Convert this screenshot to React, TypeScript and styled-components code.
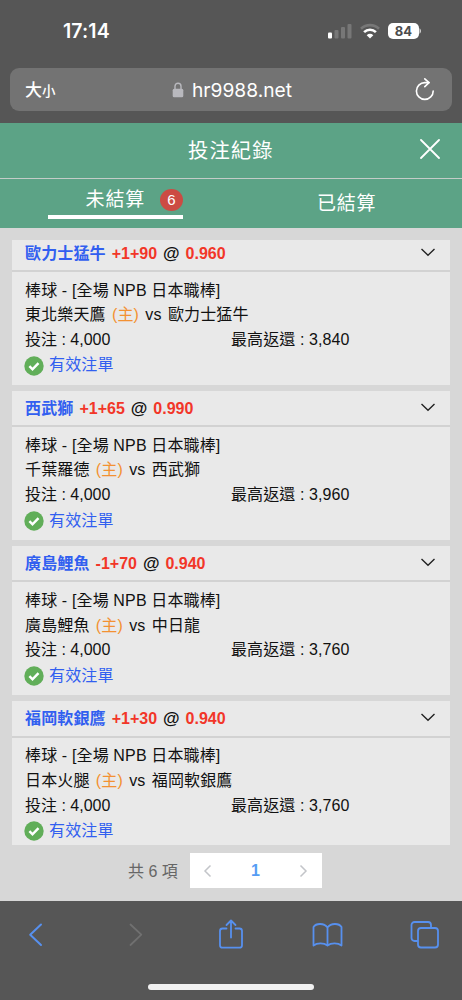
import React from "react";
import styled, { createGlobalStyle } from "styled-components";

const GlobalStyle = createGlobalStyle`
  * { box-sizing: border-box; }
  html, body { margin: 0; padding: 0; }
  body {
    background: #565656;
    font-family: "Liberation Sans", "Noto Sans CJK TC", sans-serif;
    font-size: 16px;
    color: #111;
  }
  svg { display: block; flex: none; }
`;

const Phone = styled.div`
  width: 462px;
  height: 1000px;
  display: flex;
  flex-direction: column;
  overflow: hidden;
  background: #565656;
`;

const StatusBar = styled.div`
  height: 68px;
  display: flex;
  justify-content: space-between;
  padding: 20px 41px 0 63px;
`;

const Clock = styled.div`
  font: 600 19.5px/23px Inter, sans-serif;
  letter-spacing: 0.1px;
  color: #fff;
`;

const StatusIcons = styled.div`
  display: flex;
  height: 22px;
  align-items: center;
`;

const Signal = styled.svg`
  margin-right: 8px;
`;

const Battery = styled.div`
  width: 31px;
  height: 16px;
  margin-left: 8px;
  border-radius: 5px;
  background: #fff;
  color: #4c4c4c;
  text-align: center;
  font: 700 13px/16px Inter, sans-serif;
`;

const AddressBar = styled.div`
  display: flex;
  align-items: center;
  height: 43px;
  margin: 0 10px 12px;
  padding: 0 17px 0 15px;
  border-radius: 9px;
  background: #737373;
  color: #fff;
`;

const TextSize = styled.div`
  width: 147px;
  font: 500 17px/24px "Noto Sans CJK TC", sans-serif;
  white-space: nowrap;

  small { font-size: 13.5px; }
`;

const Domain = styled.div`
  flex: 1;
  margin-left: 8px;
  font: 400 19.2px/24px Inter, sans-serif;
`;

const TitleBar = styled.header`
  display: flex;
  align-items: center;
  height: 56px;
  padding: 0 22px 3px 188px;
  background: #5ca386;
  border-bottom: 1px solid #c3ccc8;
  color: #fff;
`;

const Title = styled.h1`
  flex: 1;
  margin: 0;
  font: 400 20.3px/30px "Noto Sans CJK TC", sans-serif;
  letter-spacing: 1.1px;
`;

const Tabs = styled.nav`
  display: grid;
  grid-template-columns: 1fr 1fr;
  height: 49px;
  background: #5ca386;
  color: #fff;
`;

const Tab = styled.div<{ $active?: boolean }>`
  display: flex;
  align-items: flex-start;
  padding-top: ${(p) => (p.$active ? 5 : 9)}px;
  padding-left: ${(p) => (p.$active ? 48 : 86)}px;
  font: 400 19px/28px "Noto Sans CJK TC", sans-serif;
  letter-spacing: 0.8px;
`;

const ActiveLabel = styled.div`
  display: flex;
  align-items: center;
  justify-content: flex-end;
  width: 135px;
  height: 35px;
  padding-bottom: 3px;
  border-bottom: 4px solid #fff;
`;

const Count = styled.span`
  width: 23px;
  height: 22px;
  margin: 3px 0 0 15px;
  border-radius: 50%;
  background: #cc4b43;
  font: 400 15px/22px "Liberation Sans", sans-serif;
  letter-spacing: 0;
  text-align: center;
`;

const Content = styled.main`
  display: flex;
  flex-direction: column;
  height: 673px;
  padding: 12px 12px 0;
  background: #d7d7d7;
`;

const BetList = styled.div`
  display: flex;
  flex: none;
  flex-direction: column;
  justify-content: flex-end;
  height: 605px;
  overflow: hidden;
`;

const BetWindow = styled.div`
  display: flex;
  flex: none;
  flex-direction: column;
  gap: 6px;
  height: 609.5px;
`;

const Card = styled.article`
  flex: none;
  height: 149.2px;
  background: #e9e9e9;
`;

const CardHeader = styled.div`
  display: flex;
  align-items: center;
  height: 36.5px;
  padding: 0 14px 0 13px;
  border-bottom: 2px solid #d2d2d2;
  font-weight: 700;
  line-height: 24px;
`;

const Pick = styled.div`
  flex: 1;
  padding-top: 1.5px;
  white-space: pre;
  word-spacing: 1.5px;
`;

const Team = styled.span`
  color: #315ff0;
  letter-spacing: 0.15px;
`;

const At = styled.span`
  font-size: 17px;
`;

const Odds = styled.span`
  color: #f23628;
`;

const CardBody = styled.div`
  padding: 6.5px 12px 0 13px;
  line-height: 24.8px;
`;

const Line = styled.div`
  display: flex;
  height: 24.8px;
  white-space: pre;
`;

const Cjk = styled.span`
  letter-spacing: 0.14px;
`;

const Matchup = styled(Cjk)`
  word-spacing: 1.7px;
`;

const Home = styled.span`
  color: #f39132;
`;

const Stake = styled.div`
  width: 206px;
`;

const Payout = styled.div`
  letter-spacing: 0.1px;
`;

const Status = styled.div`
  display: flex;
  align-items: center;
  gap: 5px;
  height: 26px;
  margin-left: -1px;
  color: #315ff0;
`;

const Pager = styled.div`
  display: flex;
  align-items: center;
  height: 35px;
  margin: 8px 0 0 116px;
`;

const Total = styled.div`
  width: 62px;
  padding-bottom: 2px;
  color: #666;
  white-space: nowrap;
`;

const PageBox = styled.div`
  display: flex;
  align-items: center;
  justify-content: space-between;
  width: 132px;
  height: 35px;
  padding: 0 14px 0 13px;
  background: #fff;
  color: #559cf4;
  font-weight: 700;
`;

const Toolbar = styled.footer`
  display: flex;
  height: 86px;
  padding: 18px 22px 0 28px;
  color: #5790ee;
`;

const ToolIcon = styled.svg<{ $gap?: number }>`
  margin-left: ${(p) => p.$gap ?? 0}px;
`;

const HomeBar = styled.div`
  width: 166px;
  height: 6px;
  margin: -3px auto 0;
  border-radius: 3px;
  background: #f1f1f1;
`;

const bets = [
  { pick: "歐力士猛牛", line: "+1+90", odds: "0.960", home: "東北樂天鷹", away: "歐力士猛牛", payout: "3,840" },
  { pick: "西武獅", line: "+1+65", odds: "0.990", home: "千葉羅德", away: "西武獅", payout: "3,960" },
  { pick: "廣島鯉魚", line: "-1+70", odds: "0.940", home: "廣島鯉魚", away: "中日龍", payout: "3,760" },
  { pick: "福岡軟銀鷹", line: "+1+30", odds: "0.940", home: "日本火腿", away: "福岡軟銀鷹", payout: "3,760" },
];

function BetCard({ bet }: { bet: (typeof bets)[number] }) {
  return (
    <Card>
      <CardHeader>
        <Pick>
          <Team>{bet.pick}</Team> <Odds>{bet.line}</Odds> <At>@</At> <Odds>{bet.odds}</Odds>
        </Pick>
        <svg width="16" height="12" viewBox="0 0 16 12" fill="none" stroke="#222" strokeWidth="1.4">
          <path d="M1.5 2 8 8.2 14.5 2" />
        </svg>
      </CardHeader>
      <CardBody>
        <Line><Cjk>棒球 - [全場 NPB 日本職棒]</Cjk></Line>
        <Line>
          <Matchup>{bet.home} <Home>(主)</Home> vs {bet.away}</Matchup>
        </Line>
        <Line>
          <Stake>投注 : 4,000</Stake>
          <Payout>最高返還 : {bet.payout}</Payout>
        </Line>
        <Status>
          <svg width="20" height="20" viewBox="0 0 20 20">
            <circle cx="10" cy="10" r="9.7" fill="#61ae59" />
            <path d="m5.4 10.2 3.1 3.1 6-6.2" fill="none" stroke="#fff" strokeWidth="2.5" />
          </svg>
          <Cjk>有效注單</Cjk>
        </Status>
      </CardBody>
    </Card>
  );
}

export default function App() {
  return (
    <Phone>
      <GlobalStyle />
      <StatusBar>
        <Clock>17:14</Clock>
        <StatusIcons>
          <Signal width="24" height="16" viewBox="0 0 24 16">
            <rect x="0" y="9.5" width="4" height="6" rx="1" fill="#fff" />
            <g fill="#777">
              <rect x="6.5" y="7" width="4" height="8.5" rx="1" />
              <rect x="13" y="4" width="4" height="11.5" rx="1" />
              <rect x="19.5" y="1" width="4" height="14.5" rx="1" />
            </g>
          </Signal>
          <svg width="20" height="16" viewBox="0 0 20 16" fill="none" strokeWidth="2.6">
            <path d="M1 5.7C6 .9 14 .9 19 5.7" stroke="#777" />
            <path d="M4.1 9.1c3.3-3.2 8.5-3.2 11.8 0" stroke="#fff" />
            <path d="M10 15.5 6.7 12.2c1.9-1.8 4.7-1.8 6.6 0z" fill="#fff" />
          </svg>
          <Battery>84</Battery>
          <svg width="2" height="6" viewBox="0 0 2 6">
            <path d="M.5.3C2.4 1.3 2.4 4.7.5 5.7z" fill="#ddd" />
          </svg>
        </StatusIcons>
      </StatusBar>
      <AddressBar>
        <TextSize>大<small>小</small></TextSize>
        <svg width="12" height="16" viewBox="0 0 12 16">
          <rect x=".7" y="6.7" width="10.6" height="8.6" rx="1.5" fill="#b9b9be" />
          <path d="M3 7.5V4.2a3 3 0 0 1 6 0v3.3" fill="none" stroke="#b9b9be" strokeWidth="1.4" />
        </svg>
        <Domain>hr9988.net</Domain>
        <svg width="20" height="24" viewBox="0 0 20 24" fill="none" stroke="#fff" strokeWidth="1.6" strokeLinecap="round" strokeLinejoin="round">
          <path d="M18.2 13A8.4 8.4 0 1 1 9.8 4.6h4.2" />
          <path d="m9.8.9 4.2 3.800-4.200 4" />
        </svg>
      </AddressBar>
      <TitleBar>
        <Title>投注紀錄</Title>
        <svg width="20" height="20" viewBox="0 0 20 20" stroke="#fff" strokeWidth="1.8" strokeLinecap="round">
          <path d="m1 1 18 18M19 1 1 19" />
        </svg>
      </TitleBar>
      <Tabs>
        <Tab $active>
          <ActiveLabel>未結算<Count>6</Count></ActiveLabel>
        </Tab>
        <Tab>已結算</Tab>
      </Tabs>
      <Content>
        <BetList>
          <BetWindow>
            {bets.map((bet) => <BetCard key={bet.home} bet={bet} />)}
          </BetWindow>
        </BetList>
        <Pager>
          <Total>共 6 項</Total>
          <PageBox>
            <svg width="9" height="14" viewBox="0 0 9 14" fill="none" stroke="#c3c5c9" strokeWidth="1.5">
              <path d="M7.5 1.5 2 7l5.5 5.5" />
            </svg>
            <span>1</span>
            <svg width="9" height="14" viewBox="0 0 9 14" fill="none" stroke="#c3c5c9" strokeWidth="1.5">
              <path d="M1.5 1.5 7 7l-5.5 5.5" />
            </svg>
          </PageBox>
        </Pager>
      </Content>
      <Toolbar>
        <ToolIcon width="16" height="32" viewBox="0 0 16 32" fill="none" stroke="currentColor" strokeWidth="2" strokeLinecap="round" strokeLinejoin="round">
          <path d="M13 5.5 2.2 15.7 13 26" />
        </ToolIcon>
        <ToolIcon $gap={84} width="16" height="32" viewBox="0 0 16 32" fill="none" stroke="#707070" strokeWidth="1.8" strokeLinecap="round" strokeLinejoin="round">
          <path d="M2.5 5.5 13.3 15.7 2.5 26" />
        </ToolIcon>
        <ToolIcon $gap={74} width="26" height="32" viewBox="0 0 26 32" fill="none" stroke="currentColor" strokeWidth="1.8" strokeLinecap="round" strokeLinejoin="round">
          <path d="M8.5 9.500H4.500A2.500 2.500 0 0 0 2 12v14.200a2.500 2.500 0 0 0 2.500 2.500h17a2.500 2.500 0 0 0 2.500-2.500V12a2.500 2.500 0 0 0-2.500-2.500h-4M13 18.500V1.500M8.500 6 13 1.500 17.500 6" />
        </ToolIcon>
        <ToolIcon $gap={68} width="31" height="32" viewBox="0 0 31 32" fill="none" stroke="currentColor" strokeWidth="1.8" strokeLinejoin="round">
          <path d="M15.5 8.500C12 3.800 4 4 1.500 8v18.500c3.500-2.800 10.500-2.800 14 0 3.500-2.800 10.500-2.800 14 0V8c-2.500-4-10.500-4.200-14 .5v18" />
        </ToolIcon>
        <ToolIcon $gap={67} width="30" height="32" viewBox="0 0 30 32" fill="none" stroke="currentColor" strokeWidth="1.8">
          <rect x="8" y="9" width="20" height="19.5" rx="3" />
          <path d="M8 22H4.5a3 3 0 0 1-3-3V6a3 3 0 0 1 3-3H18a3 3 0 0 1 3 3v3" />
        </ToolIcon>
      </Toolbar>
      <HomeBar />
    </Phone>
  );
}
